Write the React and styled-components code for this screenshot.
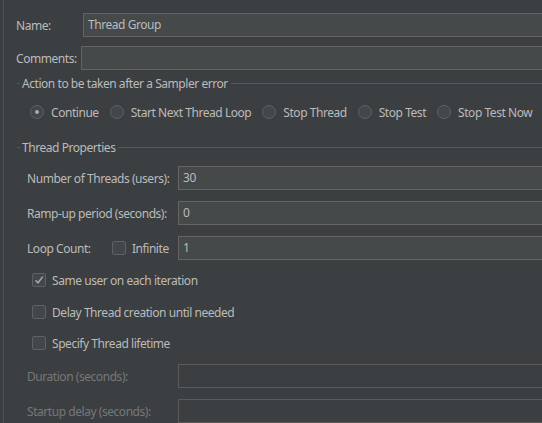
import React from "react";
import styled, { createGlobalStyle } from "styled-components";

const Global = createGlobalStyle`
  html, body { margin: 0; padding: 0; background: #3c3f41; overflow: hidden; }
  body {
    font-family: "Noto Sans", "Open Sans", sans-serif;
    font-size: 12px;
    letter-spacing: -0.45px;
    color: #bbbbbb;
  }
  * { box-sizing: border-box; }
`;

const Panel = styled.div`
  margin-left: 3px;
  width: 580px;
  height: 423px;
  border-left: 1px solid #4d5153;
  overflow: hidden;
  display: flex;
  flex-direction: column;
`;

const Title = styled.div`
  margin-top: -17px;
  padding-left: 3px;
  height: 21px;
  line-height: 16px;
  font-family: "Liberation Sans", sans-serif;
  font-weight: bold;
  font-size: 16px;
  letter-spacing: 0;
  color: #bbbbbb;
  white-space: nowrap;
`;

const TopRow = styled.div`
  display: flex;
  align-items: center;
  margin-top: ${(p) => p.$mt}px;
  padding-left: 12px;
`;

const TopLabel = styled.label`
  flex: 0 0 ${(p) => p.$w}px;
  white-space: nowrap;
`;

const TextBox = styled.div`
  flex: 1;
  height: 24px;
  line-height: 22px;
  padding: 0 4px;
  border: 1px solid ${(p) => (p.$disabled ? "#5b5a58" : "#646464")};
  background: ${(p) => (p.$disabled ? "transparent" : "#45494a")};
  color: #bbbbbb;
  white-space: nowrap;
`;

const Legend = styled.div`
  display: flex;
  align-items: center;
  margin-top: ${(p) => p.$mt}px;
  margin-left: 13px;
  height: 16px;
  white-space: nowrap;
  &::before {
    content: "";
    width: 3px;
    height: 1px;
    background: #55595b;
    margin-right: 2px;
  }
  &::after {
    content: "";
    flex: 1;
    height: 1px;
    background: #55595b;
    margin-left: 3px;
  }
`;

const RadioRow = styled.div`
  display: flex;
  align-items: center;
  margin-top: 13px;
  margin-left: 26px;
  height: 16px;
  gap: 11px;
`;

const Option = styled.label`
  display: flex;
  align-items: center;
  gap: 7px;
  white-space: nowrap;
`;

const Radio = styled.span`
  width: 14px;
  height: 14px;
  border-radius: 50%;
  border: 1px solid #5f6264;
  background: #43474a;
  display: flex;
  align-items: center;
  justify-content: center;
  &::after {
    content: "";
    width: 4px;
    height: 4px;
    border-radius: 50%;
    background: ${(p) => (p.$checked ? "#a8a8a8" : "transparent")};
  }
`;

const Box = styled.span`
  flex: 0 0 14px;
  width: 14px;
  height: 14px;
  border-radius: 2px;
  border: 1px solid #5f6264;
  background: #43474a;
  display: flex;
  align-items: center;
  justify-content: center;
`;

const Fields = styled.div`
  display: flex;
  flex-direction: column;
  gap: 11px;
  margin-top: ${(p) => p.$mt}px;
  padding-left: 23px;
`;

const FieldRow = styled.div`
  display: flex;
  align-items: center;
`;

const FieldLabel = styled.div`
  flex: 0 0 151px;
  display: flex;
  align-items: center;
  white-space: nowrap;
  color: ${(p) => (p.$disabled ? "#75787a" : "#bbbbbb")};
`;

const LoopName = styled.span`
  width: 85px;
`;

const InlineCheck = styled.label`
  display: flex;
  align-items: center;
  gap: 6px;
`;

const Checks = styled.div`
  display: flex;
  flex-direction: column;
  margin-top: 13px;
  padding-left: 28px;
`;

const CheckRow = styled.label`
  display: flex;
  align-items: center;
  gap: 6px;
  height: 14px;
  margin-top: ${(p) => p.$mt || 0}px;
  white-space: nowrap;
`;

const Check = () => (
  <svg width="10" height="10" viewBox="0 0 10 10">
    <path d="M1.5 5.2 L4 7.8 L8.8 1.6" fill="none" stroke="#a9a9a9" strokeWidth="1.5" />
  </svg>
);

export default function App() {
  return (
    <>
      <Global />
      <Panel>
        <Title>Thread Group</Title>
        <TopRow $mt={9}>
          <TopLabel $w={67}>Name:</TopLabel>
          <TextBox>Thread Group</TextBox>
        </TopRow>
        <TopRow $mt={9}>
          <TopLabel $w={65}>Comments:</TopLabel>
          <TextBox />
        </TopRow>

        <Legend $mt={5}>Action to be taken after a Sampler error</Legend>
        <RadioRow>
          <Option><Radio $checked />Continue</Option>
          <Option><Radio />Start Next Thread Loop</Option>
          <Option><Radio />Stop Thread</Option>
          <Option><Radio />Stop Test</Option>
          <Option><Radio />Stop Test Now</Option>
        </RadioRow>

        <Legend $mt={19}>Thread Properties</Legend>
        <Fields $mt={11}>
          <FieldRow>
            <FieldLabel>Number of Threads (users):</FieldLabel>
            <TextBox>30</TextBox>
          </FieldRow>
          <FieldRow>
            <FieldLabel>Ramp-up period (seconds):</FieldLabel>
            <TextBox>0</TextBox>
          </FieldRow>
          <FieldRow>
            <FieldLabel>
              <LoopName>Loop Count:</LoopName>
              <InlineCheck><Box />Infinite</InlineCheck>
            </FieldLabel>
            <TextBox>1</TextBox>
          </FieldRow>
        </Fields>

        <Checks>
          <CheckRow><Box><Check /></Box>Same user on each iteration</CheckRow>
          <CheckRow $mt={18}><Box />Delay Thread creation until needed</CheckRow>
          <CheckRow $mt={17}><Box />Specify Thread lifetime</CheckRow>
        </Checks>

        <Fields $mt={14}>
          <FieldRow>
            <FieldLabel $disabled>Duration (seconds):</FieldLabel>
            <TextBox $disabled />
          </FieldRow>
          <FieldRow>
            <FieldLabel $disabled>Startup delay (seconds):</FieldLabel>
            <TextBox $disabled />
          </FieldRow>
        </Fields>
      </Panel>
    </>
  );
}
